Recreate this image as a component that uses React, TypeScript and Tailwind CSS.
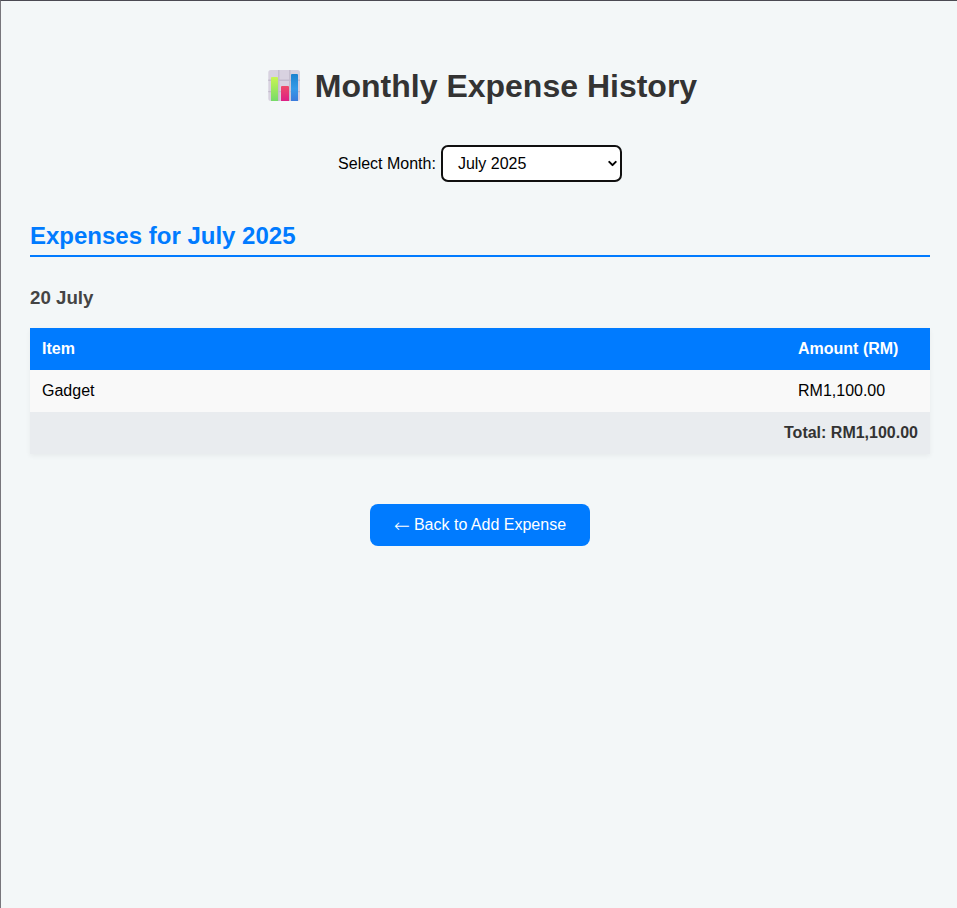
import { ChevronDown } from "lucide-react";

function ChartIcon() {
  return (
    <svg viewBox="0 0 32 32" className="h-8 w-8 shrink-0" aria-hidden="true">
      <defs>
        <linearGradient id="green" x1="0" y1="0" x2="0" y2="1">
          <stop offset="0" stopColor="#c8f552" />
          <stop offset="1" stopColor="#76db69" />
        </linearGradient>
        <linearGradient id="pink" x1="0" y1="0" x2="0" y2="1">
          <stop offset="0" stopColor="#ee4b68" />
          <stop offset="1" stopColor="#dd1f86" />
        </linearGradient>
        <linearGradient id="blue" x1="0" y1="0" x2="0" y2="1">
          <stop offset="0" stopColor="#1c83cf" />
          <stop offset="0.55" stopColor="#359ae8" />
          <stop offset="1" stopColor="#3a7bdc" />
        </linearGradient>
      </defs>
      <rect x="0.3" y="0" width="31.7" height="31" rx="2.5" fill="#d8d2e0" />
      <path d="M10.8 0V31M21.8 0V31M0.3 10.3H32M0.3 21.6H32" stroke="#c3bccd" strokeWidth="1.4" fill="none" />
      <path d="M3 8a1 1 0 0 1 1-1h5a1 1 0 0 1 1 1V31H3Z" fill="url(#green)" />
      <path d="M13 17a1 1 0 0 1 1-1h6a1 1 0 0 1 1 1V31H13Z" fill="url(#pink)" />
      <path d="M23 5a1 1 0 0 1 1-1h5a1 1 0 0 1 1 1V31H23Z" fill="url(#blue)" />
    </svg>
  );
}

export default function App() {
  return (
    <main className="h-[908px] border-t border-l border-t-[#4b4a53] border-l-[#77767c] bg-[#f3f7f8] pr-[27px] pl-[29px] pt-[61px] font-['Liberation_Sans',Arial,sans-serif] text-base text-black">
      <h1 className="flex h-12 items-center justify-center gap-[15px] pl-[5px] text-[32px] font-bold text-[#333]">
        <ChartIcon />
        <span>Monthly Expense History</span>
      </h1>
      <div className="mt-[35px] flex items-center justify-center gap-[5px]">
        <span>Select Month:</span>
        <button className="flex h-[37px] w-[181px] items-center justify-between rounded-[7px] border-2 border-[#101010] bg-white pr-px pl-[15px]">
          <span>July 2025</span>
          <ChevronDown size={13} strokeWidth={3.7} />
        </button>
      </div>
      <h2 className="mt-[39px] h-9 border-b-2 border-[#007bff] text-2xl leading-[30px] font-bold text-[#007bff]">
        Expenses for July 2025
      </h2>
      <h3 className="mt-[30px] text-[18.72px] leading-[22px] font-bold text-[#444]">20 July</h3>
      <table className="mt-[19px] w-full border-collapse shadow-[0_2px_5px_rgba(0,0,0,0.05)]">
        <thead>
          <tr className="h-[42px] bg-[#007bff] text-left text-white">
            <th className="px-3">Item</th>
            <th className="w-[144px] px-3">Amount (RM)</th>
          </tr>
        </thead>
        <tbody>
          <tr className="h-[42px] bg-[#f9f9f9]">
            <td className="px-3">Gadget</td>
            <td className="px-3">RM1,100.00</td>
          </tr>
          <tr className="h-[42px] bg-[#e9ecef] text-right font-bold text-[#333]">
            <td colSpan={2} className="px-3">Total: RM1,100.00</td>
          </tr>
        </tbody>
      </table>
      <div className="mt-[50px] flex justify-center">
        <a className="flex h-[42px] w-[220px] items-center justify-center gap-[4px] rounded-[8px] bg-[#007bff] text-white">
          <span className="w-4 text-center font-['DejaVu_Sans',sans-serif] text-[19px] leading-4 font-extralight">←</span>
          <span>Back to Add Expense</span>
        </a>
      </div>
    </main>
  );
}
